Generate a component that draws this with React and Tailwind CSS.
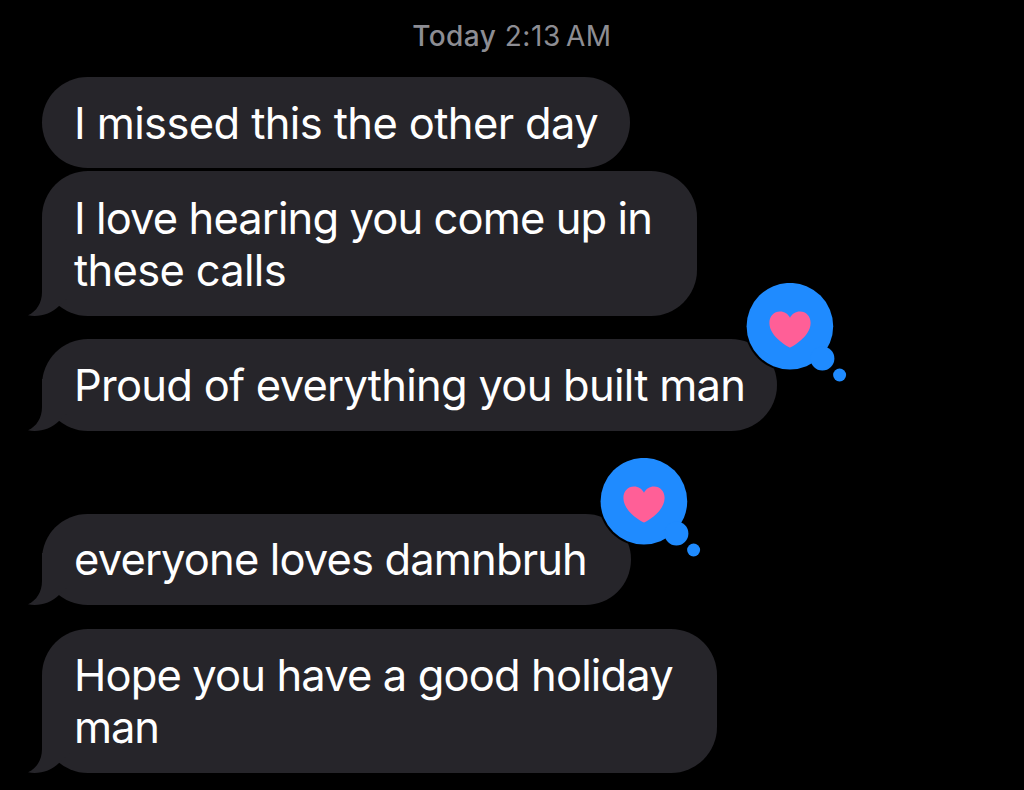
function Tail() {
  return (
    <svg className="absolute -left-[14px] bottom-0" width="44" height="52" viewBox="0 0 44 52" fill="#26252a">
      <path d="M14 0V28C14 39 8.500 47.500 0 51.300C11 53.500 23 50 31 42L44 30V0Z" />
    </svg>
  );
}

function Heart() {
  return (
    <svg className="absolute -right-[70px] -top-[56px]" width="101" height="100" viewBox="-0.600 0.300 101 100">
      <circle cx="43.3" cy="43.5" r="45.3" fill="#000" />
      <g fill="#1f8bff">
        <circle cx="43.3" cy="43.5" r="43.3" />
        <circle cx="75.800" cy="75.700" r="12" />
        <circle cx="93" cy="92.300" r="6.500" />
      </g>
      <path fill="#ff5f97" d="M43.400 64.800C42.600 64.800 22.800 54.500 22.800 40.300C22.800 33.500 27.500 28.800 33.300 28.800C38 28.800 41.400 31.200 43.400 35C45.400 31.200 48.800 28.800 53.500 28.800C59.300 28.800 64 33.500 64 40.300C64 54.500 44.200 64.800 43.400 64.800Z" />
    </svg>
  );
}

function Bubble({ className, lines, tail, heart }) {
  return (
    <div className={`relative flex flex-col justify-center rounded-[46px] bg-[#26252a] pl-[32px] ${className}`}>
      {tail && <Tail />}
      {lines.map((l) => (
        <div key={l.text} className="relative h-[52px] whitespace-nowrap leading-[52px]">
          <span className={l.className}>{l.text}</span>
        </div>
      ))}
      {heart && <Heart />}
    </div>
  );
}

export default function App() {
  return (
    <main className="flex h-[790px] w-[1024px] flex-col items-start overflow-hidden bg-black pl-[42px] font-['Inter',sans-serif] text-[43.5px] font-[370] text-white">
      <div className="-ml-[42px] flex h-[77px] w-[1024px] justify-center pt-[18px] text-[28px] leading-[36px] text-[#8d8d93]">
        <span className="flex gap-[8.5px]">
          <span className="font-[550] tracking-[0.4px]">Today</span>
          <span className="tracking-[0.6px] [word-spacing:-3.5px]">2:13 AM</span>
        </span>
      </div>
      <Bubble className="h-[91.4px] w-[588px]" lines={[{ text: "I missed this the other day", className: "tracking-[-0.62px]" }]} />
      <Bubble tail className="mt-[3px] h-[144.6px] w-[654.5px]" lines={[{ text: "I love hearing you come up in", className: "tracking-[-0.9px]" }, { text: "these calls", className: "tracking-[-0.7px]" }]} />
      <Bubble tail heart className="mt-[23.3px] h-[92px] w-[735px]" lines={[{ text: "Proud of everything you built man", className: "tracking-[-0.74px]" }]} />
      <Bubble tail heart className="mt-[82.3px] h-[91.8px] w-[589px]" lines={[{ text: "everyone loves damnbruh", className: "tracking-[-0.86px]" }]} />
      <Bubble tail className="mt-[23.4px] h-[144.4px] w-[675px]" lines={[{ text: "Hope you have a good holiday", className: "tracking-[-0.87px]" }, { text: "man", className: "tracking-[-1.2px]" }]} />
    </main>
  );
}
